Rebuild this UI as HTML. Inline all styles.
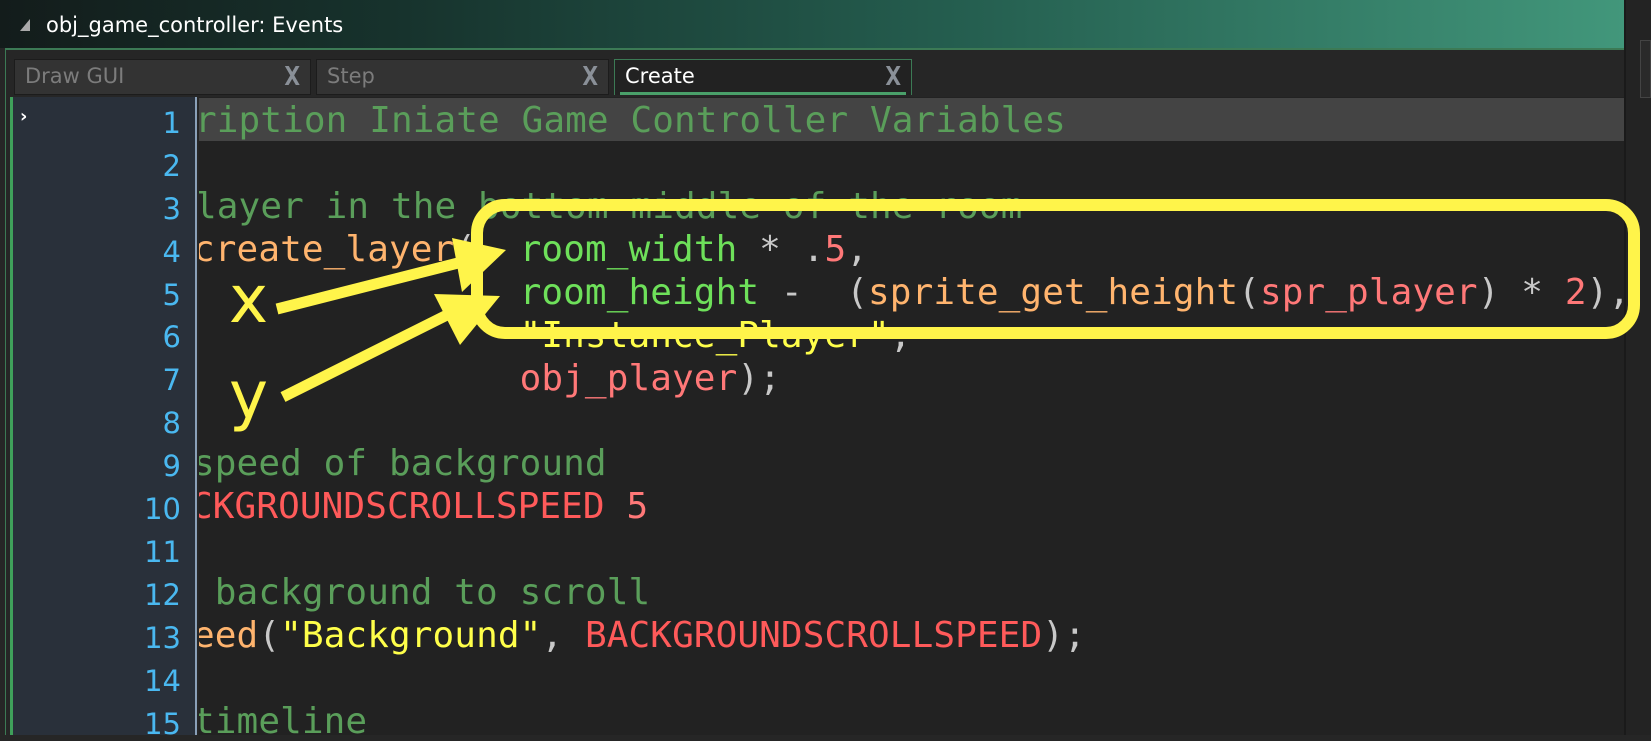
<!DOCTYPE html>
<html><head><meta charset="utf-8"><style>
*{margin:0;padding:0;box-sizing:border-box}
body{width:1651px;height:735px;overflow:hidden;background:#262626;position:relative;font-family:"DejaVu Sans","Liberation Sans",sans-serif}
#title{position:absolute;left:0;top:0;width:1624px;height:48px;background:linear-gradient(90deg,#131c1b 0%,#17332d 25%,#255f50 60%,#42977b 100%)}
#title span{position:absolute;left:46px;top:13px;color:#fff;font-size:21px}
#title i{position:absolute;left:20px;top:19px;width:0;height:0;border-left:10px solid transparent;border-bottom:12px solid #aaa}
#panel{position:absolute;left:5px;top:48px;width:1619px;height:687px;background:#262626;border-top:2px solid #3c7a55;border-left:1px solid #3c7a55}
.tab{position:absolute;top:59px;height:36px;background:#333;border:1px solid #1c1c1c;color:#7c7c7c;font-size:21px;padding:4px 0 0 10px;font-family:"DejaVu Sans",sans-serif}
.tab b{position:absolute;right:10px;top:2px;font-weight:bold;color:#8a9098;font-size:26px;font-family:"DejaVu Sans Mono",monospace}
.tab.on{background:#222;color:#fff;border:1px solid #3c7a55;border-bottom:none}
.tab.on:after{content:"";position:absolute;left:5px;right:5px;bottom:0;height:3px;background:#4aa06a}
#gutter{position:absolute;left:10px;top:97px;width:187px;height:638px;background:#29303a;border-left:3px solid #3fa05a;border-right:2px solid #8aa0b8}
#code{position:absolute;left:199px;top:97px;width:1425px;height:638px;background:#222;overflow:hidden}
#hl{position:absolute;left:199px;top:98px;width:1425px;height:43px;background:#444}
.ln{position:absolute;right:1470px;width:60px;text-align:right;color:#4ab8f0;font-size:29px;font-family:"DejaVu Sans","Liberation Sans",sans-serif}
.cl{position:absolute;left:195px;white-space:pre;font-family:"DejaVu Sans Mono","Liberation Mono",monospace;font-size:36px;letter-spacing:0.1px}
.c{color:#5a9e5a}.g{color:#6ee05a}.o{color:#ffb46e}.r{color:#ff5a5a}.p{color:#ff7878}.y{color:#ffff4a}.w{color:#c8c8c8}
</style></head><body>
<div id="title"><i></i><span>obj_game_controller: Events</span></div>
<div id="panel"></div>
<div class="tab" style="left:14px;width:297px">Draw GUI<b>X</b></div>
<div class="tab" style="left:316px;width:293px">Step<b>X</b></div>
<div class="tab on" style="left:614px;width:298px">Create<b>X</b></div>
<div id="gutter"></div>
<div style="position:absolute;left:20px;top:106px;color:#fff;font-size:18px;font-weight:bold">›</div>
<div id="code"></div>
<div id="hl"></div>
<div style="position:absolute;left:1624px;top:0;width:27px;height:735px;background:#232323;border-left:2px solid #1a1a1a"></div>
<div style="position:absolute;left:1640px;top:40px;width:11px;height:58px;border:1px solid #444;background:#2a2a2a"></div>

<div class="ln" style="top:106px">1</div>
<div class="ln" style="top:149px">2</div>
<div class="ln" style="top:192px">3</div>
<div class="ln" style="top:235px">4</div>
<div class="ln" style="top:278px">5</div>
<div class="ln" style="top:320px">6</div>
<div class="ln" style="top:363px">7</div>
<div class="ln" style="top:406px">8</div>
<div class="ln" style="top:449px">9</div>
<div class="ln" style="top:492px">10</div>
<div class="ln" style="top:535px">11</div>
<div class="ln" style="top:578px">12</div>
<div class="ln" style="top:621px">13</div>
<div class="ln" style="top:664px">14</div>
<div class="ln" style="top:707px">15</div>

<div style="position:absolute;left:199px;top:100px;width:1425px;height:635px;overflow:hidden">
<div class="cl c" style="left:-4px;top:0px">ription Iniate Game Controller Variables</div>
<div class="cl c" style="left:-4px;top:86px">layer in the bottom middle of the room</div>
<div class="cl" style="left:-6px;top:129px"><span class="o">create_layer</span><span class="w">(</span>  <span class="g">room_width</span> <span class="w">* .</span><span class="p">5</span><span class="w">,</span></div>
<div class="cl" style="left:-6px;top:172px">               <span class="g">room_height</span> <span class="w">-  (</span><span class="o">sprite_get_height</span><span class="w">(</span><span class="p">spr_player</span><span class="w">) * </span><span class="p">2</span><span class="w">),</span></div>
<div class="cl" style="left:-6px;top:215px">               <span class="y">"Instance_Player"</span><span class="w">,</span></div>
<div class="cl" style="left:-6px;top:258px">               <span class="p">obj_player</span><span class="w">);</span></div>
<div class="cl c" style="left:-6px;top:343px">speed of background</div>
<div class="cl r" style="left:-8px;top:386px">CKGROUNDSCROLLSPEED <span class="p">5</span></div>
<div class="cl c" style="left:-6px;top:472px"> background to scroll</div>
<div class="cl" style="left:-6px;top:515px"><span class="o">eed</span><span class="w">(</span><span class="y">"Background"</span><span class="w">, </span><span class="r">BACKGROUNDSCROLLSPEED</span><span class="w">);</span></div>
<div class="cl c" style="left:-6px;top:601px">timeline</div>
</div>

<svg style="position:absolute;left:0;top:0" width="1651" height="735">
<g fill="none" stroke="#fff44a" stroke-width="12" stroke-linecap="butt">
<rect x="477" y="205" width="1157" height="128" rx="28"/>
<line x1="277" y1="309" x2="462" y2="262" stroke-width="11"/>
<line x1="283" y1="397" x2="451" y2="313" stroke-width="11"/>
</g>
<g fill="#fff44a">
<polygon points="506,250 452,238 462,292"/>
<polygon points="500,296 434,294 460,345"/>
</g>
<text x="229" y="322" fill="#fff44a" font-size="66" font-family="DejaVu Sans,sans-serif">x</text>
<text x="229" y="418" fill="#fff44a" font-size="66" font-family="DejaVu Sans,sans-serif">y</text>
</svg>
</body></html>
